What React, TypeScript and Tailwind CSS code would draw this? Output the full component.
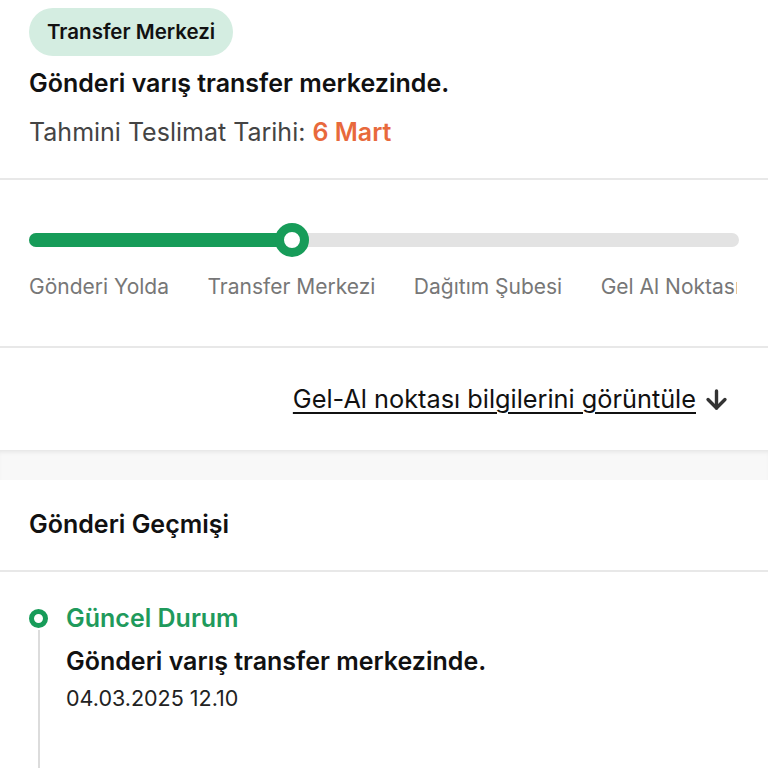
import { ArrowDown } from "lucide-react";

const steps = ["Gönderi Yolda", "Transfer Merkezi", "Dağıtım Şubesi", "Gel Al Noktası"];

export default function App() {
  return (
    <div className="min-h-[768px] bg-white text-[#111] font-['Inter',sans-serif] overflow-hidden">
      {/* status header */}
      <div className="px-[29px] pt-[8px] pb-[30px] border-b-2 border-[#e8e8e8]">
        <span className="inline-flex items-center h-[48px] px-[18px] rounded-full bg-[#d4ede1] text-[20.5px] font-semibold">
          Transfer Merkezi
        </span>
        <p className="mt-[11px] text-[25px] font-semibold leading-[32px]">Gönderi varış transfer merkezinde.</p>
        <p className="mt-[17px] text-[25px] leading-[32px] text-[#444]">
          Tahmini Teslimat Tarihi: <span className="font-semibold text-[#e8693c]">6 Mart</span>
        </p>
      </div>

      {/* progress */}
      <div className="px-[29px] pt-[43px] pb-[44px] border-b-2 border-[#e8e8e8]">
        <div className="relative h-[34px] flex items-center">
          <div className="w-full h-[14px] rounded-full bg-[#e3e3e3]">
            <div className="h-full w-[263px] rounded-full bg-[#179c59]" />
          </div>
          <div className="absolute left-[246px] top-0 w-[34px] h-[34px] rounded-full border-[9px] border-[#179c59] bg-white" />
        </div>
        <div className="mt-[15px] mr-[2px] flex gap-[38.5px] overflow-hidden whitespace-nowrap text-[21px] leading-[30px] text-[#777]">
          {steps.map((s) => (
            <span key={s} className="shrink-0">{s}</span>
          ))}
        </div>
      </div>

      {/* pickup link */}
      <div className="h-[102px] flex items-center justify-end pr-[37px] gap-[6px]">
        <span className="text-[25.3px] underline underline-offset-[4px] decoration-[1.5px]">Gel-Al noktası bilgilerini görüntüle</span>
        <ArrowDown size={29} strokeWidth={2.8} className="text-[#333]" />
      </div>

      <div className="h-[30px] bg-[#f8f8f8] shadow-[inset_0_4px_4px_-2px_rgba(0,0,0,0.08)]" />

      {/* history */}
      <div className="px-[29px] h-[92px] flex items-center border-b-2 border-[#e8e8e8]">
        <h2 className="text-[25px] font-semibold">Gönderi Geçmişi</h2>
      </div>

      <div className="flex pl-[29px] pt-[37px]">
        <div className="flex flex-col items-center w-[19px]">
          <div className="w-[19px] h-[19px] rounded-full border-[5px] border-[#179c59] bg-white" />
          <div className="w-[2px] h-[140px] bg-[#dcdcdc] mt-[2px]" />
        </div>
        <div className="ml-[18px] -mt-[7px]">
          <p className="text-[25px] font-semibold text-[#1f9a5c] leading-[32px]">Güncel Durum</p>
          <p className="mt-[11px] text-[25px] font-semibold leading-[32px]">Gönderi varış transfer merkezinde.</p>
          <p className="mt-[6px] text-[21.5px] leading-[30px] text-[#222]">04.03.2025 12.10</p>
        </div>
      </div>
    </div>
  );
}
